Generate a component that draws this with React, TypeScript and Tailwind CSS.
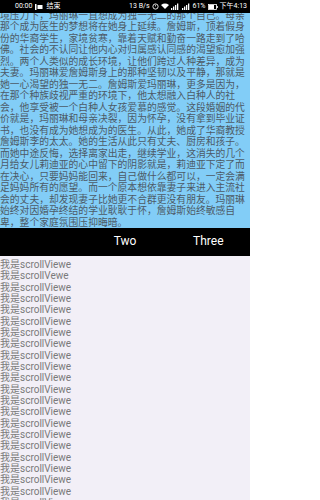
import React from "react";

const lines = [
  "境压力下，玛丽琳一直想成为独一无二的那个自己。母亲",
  "那个成为医生的梦想将在她身上延续。詹姆斯，顶着假身",
  "份的华裔学生，家境贫寒，靠着天赋和勤奋一路走到了哈",
  "佛。社会的不认同让他内心对归属感认同感的渴望愈加强",
  "烈。两个人类似的成长环境，让他们跨过人种差异，成为",
  "夫妻。玛丽琳爱詹姆斯身上的那种坚韧以及平静，那就是",
  "她一心渴望的独一无二。詹姆斯爱玛丽琳，更多是因为，",
  "在那个种族歧视严重的环境下，他太想融入白种人的社",
  "会，他享受被一个白种人女孩爱慕的感觉。这段婚姻的代",
  "价就是，玛丽琳和母亲决裂，因为怀孕，没有拿到毕业证",
  "书，也没有成为她想成为的医生。从此，她成了华裔教授",
  "詹姆斯李的太太。她的生活从此只有丈夫、厨房和孩子。",
  "而她中途反悔，选择离家出走，继续学业，这消失的几个",
  "月给女儿莉迪亚的心中留下的阴影就是，莉迪亚下定了而",
  "在决心，只要妈妈能回来，自己做什么都可以，一定会满",
  "足妈妈所有的愿望。而一个原本想依靠妻子来进入主流社",
  "会的丈夫，却发现妻子比她更不合群更没有朋友。玛丽琳",
  "始终对因婚孕终结的学业耿耿于怀，詹姆斯始终敏感自",
  "卑，整个家庭氛围压抑晦暗。",
];

const items = Array.from({ length: 23 }, (_, i) =>
  i === 1 ? "我是scrollVewe" : "我是scrollViewe"
);

function Signal() {
  return (
    <svg width="9" height="7" viewBox="0 0 9 7" className="block">
      <rect x="0" y="5" width="1.3" height="2" fill="#fff" />
      <rect x="2" y="3.5" width="1.3" height="3.5" fill="#fff" />
      <rect x="4" y="2" width="1.3" height="5" fill="#fff" />
      <rect x="6" y="0.5" width="1.3" height="6.5" fill="#fff" />
    </svg>
  );
}

export default function App() {
  return (
    <div
      className="w-[250px] h-[500px] overflow-hidden flex flex-col bg-[#f2eff7]"
      style={{ fontFamily: 'Roboto, "Noto Sans CJK SC", sans-serif' }}
    >
      {/* status bar */}
      <div className="h-[13px] shrink-0 bg-black text-white flex items-center justify-between pl-[15px] pr-[3px] text-[7px] leading-none relative z-10">
        <div className="flex items-center gap-[3px]">
          <span>00:00</span>
          <svg width="8" height="6" viewBox="0 0 8 6">
            <rect x="0" y="0" width="1.5" height="6" fill="#fff" />
            <rect x="2.5" y="1" width="5" height="4" fill="#fff" />
          </svg>
          <span>结束</span>
        </div>
        <div className="flex items-center gap-[2px]">
          <span>13 B/s</span>
          <svg width="7" height="7" viewBox="0 0 8 8">
            <circle cx="4" cy="4" r="3" fill="none" stroke="#fff" strokeWidth="1" />
            <line x1="4" y1="4" x2="4" y2="2" stroke="#fff" strokeWidth="0.8" />
          </svg>
          <svg width="8" height="7" viewBox="0 0 10 8">
            <path d="M5 7 L0 2 Q5 -1.5 10 2 Z" fill="#fff" />
          </svg>
          <Signal />
          <Signal />
          <span>61%</span>
          <svg width="10" height="6" viewBox="0 0 10 6">
            <rect x="0.5" y="0.5" width="8" height="5" fill="none" stroke="#fff" strokeWidth="0.8" />
            <rect x="1" y="1" width="5" height="4" fill="#fff" />
            <rect x="8.6" y="2" width="1.2" height="2" fill="#fff" />
          </svg>
          <span>下午4:13</span>
        </div>
      </div>

      {/* blue text area */}
      <div className="h-[215px] shrink-0 bg-[#82cdf7] overflow-hidden">
        <div
          className="-mt-[3.5px] text-[9.8px] leading-[11.5px] text-[#4d5a66]"
          style={{ fontFamily: '"Noto Sans CJK SC", sans-serif' }}
        >
          {lines.map((l, i) => (
            <div key={i} className="whitespace-nowrap">
              {l}
            </div>
          ))}
        </div>
      </div>

      {/* tab bar */}
      <div className="h-[28px] shrink-0 bg-black grid grid-cols-3 items-center text-white text-[12px] leading-none pb-[3px]">
        <div></div>
        <div className="text-center">Two</div>
        <div className="text-center">Three</div>
      </div>

      {/* list */}
      <div className="flex-1 overflow-hidden pt-[3px] text-[10px] leading-[11.33px] text-[#7a7a7a]">
        {items.map((t, i) => (
          <div key={i} className="whitespace-nowrap">
            {t}
          </div>
        ))}
      </div>
    </div>
  );
}
